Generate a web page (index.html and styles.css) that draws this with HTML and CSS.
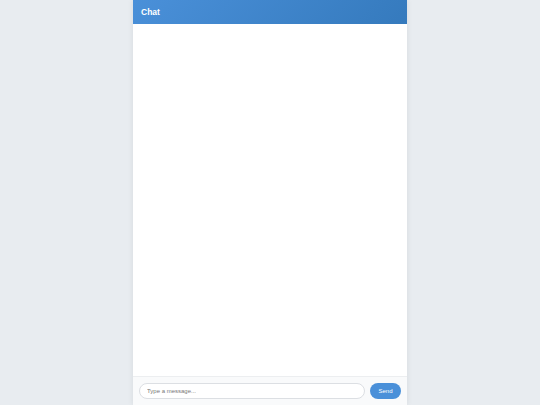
FILE: index.html
```html
<!DOCTYPE html>
<html>
<head>
<meta charset="utf-8">
<link rel="stylesheet" href="styles.css">
</head>
<body>
<div class="chat">
  <div class="chat-header">Chat</div>
  <div class="chat-messages"></div>
  <div class="chat-input">
    <input class="msg-input" type="text" placeholder="Type a message...">
    <button class="send-btn">Send</button>
  </div>
</div>
</body>
</html>
```
FILE: styles.css
```css
html, body {
  margin: 0;
  padding: 0;
  height: 100%;
}
body {
  background: #e8ecf0;
  font-family: "Liberation Sans", Arial, sans-serif;
  display: flex;
  justify-content: center;
}
.chat {
  width: 274px;
  height: 405px;
  background: #fff;
  display: flex;
  flex-direction: column;
  box-shadow: 0 0 6px rgba(0,0,0,0.08);
}
.chat-header {
  height: 24px;
  box-sizing: border-box;
  padding: 0 8px;
  display: flex;
  align-items: center;
  background: linear-gradient(135deg, #4a90d9, #357abd);
  color: #fff;
  font-weight: bold;
  font-size: 8.5px;
}
.chat-messages {
  flex: 1;
}
.chat-input {
  border-top: 1px solid #eceef0;
  background: #f9fafb;
  padding: 6px;
  display: flex;
  gap: 5px;
  align-items: center;
}
.msg-input {
  flex: 1;
  height: 16px;
  box-sizing: border-box;
  border: 1px solid #dcdfe3;
  border-radius: 10px;
  padding: 0 7px;
  font-family: "Liberation Sans", Arial, sans-serif;
  font-size: 6px;
  background: #fff;
  outline: none;
}
.msg-input::placeholder {
  color: #777;
}
.send-btn {
  width: 31px;
  height: 16px;
  border: none;
  border-radius: 10px;
  background: #4a90d9;
  color: #fff;
  font-family: "Liberation Sans", Arial, sans-serif;
  font-size: 6px;
  padding: 0;
}
```
